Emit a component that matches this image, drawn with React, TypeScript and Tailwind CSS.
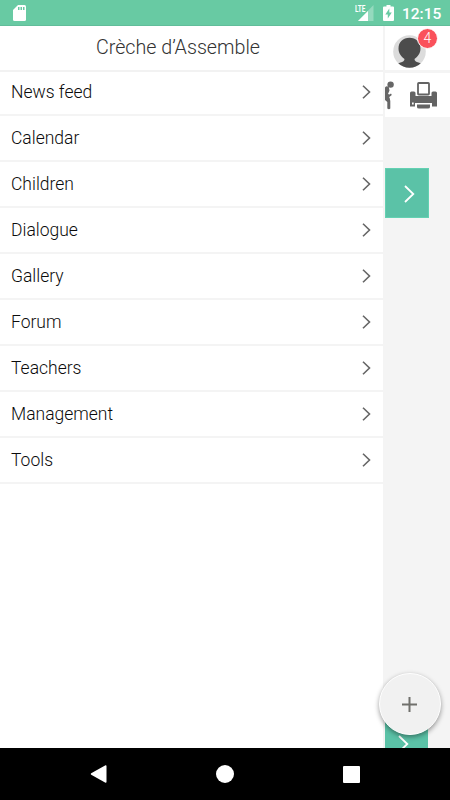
const items = [
  "News feed",
  "Calendar",
  "Children",
  "Dialogue",
  "Gallery",
  "Forum",
  "Teachers",
  "Management",
  "Tools",
];

function StatusBar() {
  return (
    <header className="flex h-[26px] shrink-0 items-start border-b border-[#61bd9a] bg-[#68caa3] pl-[13px] text-white">
      <svg className="mt-[5px] h-4 w-[13px]" viewBox="0 0 13 16">
        <path fill="#fff" d="M5 0h6.500Q13 0 13 1.500v13Q13 16 11.500 16h-10Q0 16 0 14.500V5z" />
        <path fill="#68caa3" d="M5 2h1.500v3H5zM7.500 2H9v3H7.500zM10 2h1.500v3H10z" />
      </svg>
      <div className="ml-auto flex">
        <span className="mt-[5px] h-2 w-[10px] origin-left scale-x-[.72] font-['Roboto',sans-serif] text-[9px] leading-[8px] font-bold">
          LTE
        </span>
        <svg className="-ml-[7px] mt-[5px] h-4 w-4" viewBox="0 0 16 16">
          <path fill="#fff" opacity=".3" d="M15.500 0v16H0z" />
          <path fill="#fff" d="M10 6v10H0z" />
        </svg>
        <svg className="ml-[9px] mt-[5px] h-4 w-[11px]" viewBox="0 0 11 16">
          <path fill="#fff" d="M3.500 0h4v1.500H10q1 0 1 1V15q0 1-1 1H1q-1 0-1-1V2.500q0-1 1-1h2.500z" />
          <path fill="#68caa3" d="M6.300 3.500L2.300 9.500h2.500v4l4-6H6.300z" />
        </svg>
        <span className="ml-[8px] mt-[5px] mr-[9px] w-[39px] font-['Roboto',sans-serif] text-[15.500px] leading-[19px] font-medium whitespace-nowrap">
          12:15
        </span>
      </div>
    </header>
  );
}

function Drawer() {
  return (
    <nav className="w-[383px] shrink-0 bg-white">
      <h1 className="flex h-[46px] items-center justify-center border-b-2 border-[#f2f2f2] pr-[27px] text-[19.700px] font-light text-[#333]">
        Crèche d’Assemble
      </h1>
      <ul>
        {items.map((item, i) => (
          <li
            key={item}
            className={`flex items-center justify-between border-b-2 border-[#f4f4f4] pr-3 pl-[11px] text-[17.500px] font-light text-[#0c0c0c] ${i === 0 ? "h-11 pb-[2px]" : "h-[46px]"}`}
          >
            <span>{item}</span>
            <svg className="h-[14px] w-[9px]" viewBox="0 0 9 14" fill="none" stroke="#666" strokeWidth="1.600">
              <path d="M1 .7l6.500 6.300L1 13.300" />
            </svg>
          </li>
        ))}
      </ul>
    </nav>
  );
}

function Page() {
  return (
    <main className="flex w-[67px] shrink-0 flex-col border-l-2 border-[#f4f4f4] bg-[#f4f4f4]">
      <div className="h-[44px] shrink-0 bg-white pl-2">
        <div className="relative mt-[9px] h-8 w-[33px]">
          <svg className="h-[33px] w-[33px]" viewBox="0 0 33 33">
            <defs>
              <clipPath id="avatar">
                <circle cx="16.500" cy="16.500" r="16.300" />
              </clipPath>
            </defs>
            <g clipPath="url(#avatar)">
              <path fill="#dcdcdc" d="M0 0h33v33H0z" />
              <path
                fill="#4c4c4c"
                d="M16.500 2.800C10 2.800 5.500 7 5.500 13.500c0 4.500 2.500 8 6 10.500 0 2-1.500 3-4 3.500C5.500 28 4 29 3 30v5h27v-5c-1-1-2.500-2-4.500-2.500-2.500-.5-4-1.500-4-3.500 3.500-2.500 6-6 6-10.500C27.500 7 23 2.800 16.500 2.800z"
              />
            </g>
          </svg>
          <span className="absolute -top-[7px] left-6 flex h-[21px] w-[21px] items-center justify-center rounded-full border border-white bg-[#fa515b] pb-[2px] text-[14px] leading-none font-light text-white">
            4
          </span>
        </div>
      </div>
      <div className="mt-[3px] flex h-[44px] shrink-0 items-start bg-white">
        <svg className="mt-[8px] h-[29px] w-[10px]" viewBox="0 0 10 29">
          <circle cx="5.600" cy="3.600" r="3.200" fill="#666" />
          <path
            d="M0 6.500Q1.500 4.500 3.800 6L4.500 9.500l-1.500 3.500 1.500.5 1.500-1 .8 1.500-2.500 2L0 15.500zM0 15h3.500Q5.300 17 5.300 20v7.500Q4 29 2.300 27.500V21L0 19z"
            fill="#666"
          />
        </svg>
        <svg className="mt-[9px] ml-[15px] h-[27px] w-[27px]" viewBox="0 0 27 27">
          <rect x="8" y="1" width="11" height="11.500" rx=".8" fill="none" stroke="#636363" strokeWidth="1.800" />
          <path
            fill="#636363"
            fillRule="evenodd"
            d="M0 11q0-1.500 1.500-1.500H4q1.500 0 1.500 1.500v3h16v-3q0-1.500 1.500-1.500h2.500q1.500 0 1.500 1.500v13.500h-5V21H5v3.500H0zM2 20.500v2h1.700v-2z"
          />
          <path fill="#636363" d="M7 22.500h13V25q0 1.500-2 1.500H9q-2 0-2-1.500z" />
        </svg>
      </div>
      <div className="mt-[51px] flex h-[50px] w-[44px] shrink-0 items-center justify-center border border-[#63d1b2] bg-[#5bc2a7] pl-[5px]">
        <svg className="mt-[1px] h-[18px] w-[11px]" viewBox="0 0 11 18" fill="none" stroke="#fff" strokeWidth="1.800">
          <path d="M1 1l8.300 8L1 17" />
        </svg>
      </div>
      <div className="mt-auto flex h-[30px] w-[43px] shrink-0 justify-start overflow-hidden bg-[#5bc2a7] pt-[17px] pl-[13px]">
        <svg className="h-[18px] w-[11px] shrink-0" viewBox="0 0 11 18" fill="none" stroke="#fff" strokeWidth="1.800">
          <path d="M1 1l8.300 8L1 17" />
        </svg>
      </div>
    </main>
  );
}

function NavigationBar() {
  return (
    <footer className="flex h-[52px] shrink-0 items-center bg-black pl-[90px]">
      <svg className="h-[18px] w-[17px]" viewBox="0 0 17 18" fill="#fff">
        <path d="M15.500.2Q16.500 0 16.500 1v16q0 1-1 .8L1.200 9.700q-1-.7 0-1.400z" />
      </svg>
      <span className="ml-[109px] h-[18px] w-[18px] rounded-full bg-white" />
      <span className="ml-[109px] h-[17px] w-[17px] rounded-[1px] bg-white" />
    </footer>
  );
}

export default function App() {
  return (
    <div className="relative flex h-[800px] w-[450px] flex-col overflow-hidden bg-white font-['Roboto',sans-serif]">
      <StatusBar />
      <div className="flex min-h-0 flex-1">
        <Drawer />
        <Page />
      </div>
      <NavigationBar />
      <button
        aria-label="Add"
        className="absolute top-[673px] left-[379px] flex h-[62px] w-[62px] items-center justify-center rounded-full border border-white bg-[#f1f1f1] pr-[2px] shadow-[0_2px_5px_rgba(0,0,0,0.4)]"
      >
        <svg className="h-[15px] w-[15px]" viewBox="0 0 15 15" stroke="#70706c" strokeWidth="2">
          <path d="M7.500 0v15M0 7.500h15" />
        </svg>
      </button>
    </div>
  );
}
